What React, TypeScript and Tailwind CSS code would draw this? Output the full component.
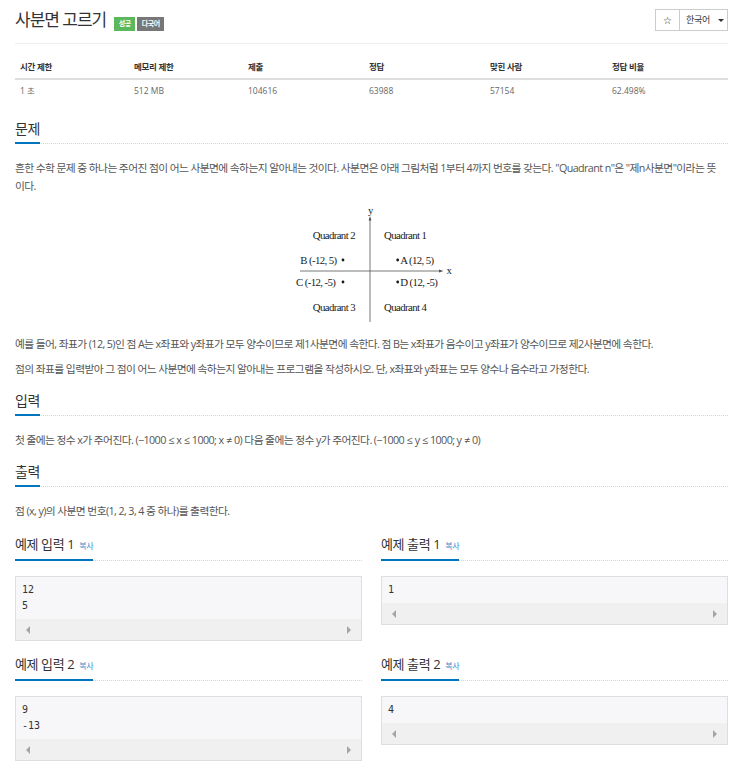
import React from "react";

function Headline({ children, small }: { children: React.ReactNode; small?: boolean }) {
  return (
    <div className="flex border-b border-dotted border-[#d5d5d5]">
      <h2
        className={
          small
            ? "-mb-px border-b-2 border-[#0076c0] pb-[3px] text-[13px] leading-[20px] tracking-[-0.4px] text-[#333] font-normal flex items-baseline"
            : "-mb-px border-b-2 border-[#0076c0] pb-[3px] text-[14px] leading-[20px] tracking-[-0.5px] text-[#333] font-normal"
        }
      >
        {children}
      </h2>
    </div>
  );
}

function SampleBox({ lines }: { lines: string[] }) {
  return (
    <div className="mt-[15px] border border-[#dedede] bg-[#f7f7f9]">
      <pre className="px-[6px] pt-[5px] pb-[5px] font-['DejaVu_Sans_Mono',monospace] text-[10px] leading-[16px] text-[#333]">
        {lines.join("\n")}
      </pre>
      <div className="h-[21px] bg-[#f0f0f0] flex items-center justify-between pl-[10px] pr-[10px]">
        <div className="w-0 h-0 border-y-[4px] border-y-transparent border-r-[4px] border-r-[#a5a5a5]" />
        <div className="w-0 h-0 border-y-[4px] border-y-transparent border-l-[4px] border-l-[#a5a5a5]" />
      </div>
    </div>
  );
}

function Sample({ title, lines }: { title: string; lines: string[] }) {
  return (
    <div>
      <Headline small>
        <span>{title}</span>
        <span className="ml-[5px] text-[8px] text-[#428bca] tracking-[-0.3px]">복사</span>
      </Headline>
      <SampleBox lines={lines} />
    </div>
  );
}

function Rel({ children }: { children: React.ReactNode }) {
  return <span className="px-[2.5px]">{children}</span>;
}

function Figure() {
  return (
    <div className="h-[126px] mb-[7px] flex justify-center">
      <svg width="200" height="126" viewBox="0 0 200 126">
        <g fill="#1a1a1a" fontSize="10.8" fontFamily="'Liberation Serif', serif">
          <text x="96" y="12">y</text>
          <text x="174.5" y="72">x</text>
          <text x="40.7" y="36.5">Quadrant 2</text>
          <text x="112" y="36.5">Quadrant 1</text>
          <text x="28.3" y="61.5">B (-12, 5)</text>
          <text x="128.3" y="61.5">A (12, 5)</text>
          <text x="24" y="83.5">C (-12, -5)</text>
          <text x="128.3" y="83.5">D (12, -5)</text>
          <text x="40.7" y="108.5">Quadrant 3</text>
          <text x="112" y="108.5">Quadrant 4</text>
          <circle cx="71" cy="58" r="1.4" />
          <circle cx="125.7" cy="58" r="1.4" />
          <circle cx="71" cy="80" r="1.4" />
          <circle cx="125.7" cy="80" r="1.4" />
        </g>
        <line x1="98" y1="16" x2="98" y2="120" stroke="#555" strokeWidth="0.8" />
        <polygon points="98,14 96.6,18.5 99.4,18.5" fill="#555" />
        <line x1="28" y1="69" x2="169" y2="69" stroke="#555" strokeWidth="0.8" />
        <polygon points="171.5,69 167,67.6 167,70.4" fill="#555" />
      </svg>
    </div>
  );
}

export default function App() {
  return (
    <div className="w-[713px] ml-[15px] bg-white font-['Open_Sans','Noto_Sans_CJK_KR',sans-serif] text-[#555] pb-[14px]">
      {/* header */}
      <div className="h-[44px] border-b border-[#eeeeee] flex justify-between items-start">
        <div className="flex items-start pt-[8px]">
          <h1 className="text-[17px] leading-[24px] tracking-[-1px] text-[#333] font-normal">사분면 고르기</h1>
          <span className="ml-[8px] mt-[9px] h-[14px] w-[21px] bg-[#5cb85c] text-white text-[7px] font-bold flex items-center justify-center tracking-[-0.5px]">
            성공
          </span>
          <span className="ml-[2px] mt-[9px] h-[14px] w-[27px] bg-[#777777] text-white text-[7px] font-bold flex items-center justify-center tracking-[-0.5px]">
            다국어
          </span>
        </div>
        <div className="flex mt-[9px]">
          <div className="w-[25px] h-[22px] border border-[#cccccc] flex items-center justify-center text-[10px] text-[#222] font-['DejaVu_Sans',sans-serif]">
            ☆
          </div>
          <div className="w-[48px] h-[22px] border border-l-0 border-[#cccccc] flex items-center pl-[6px] text-[9px] text-[#333] tracking-[-0.3px]">
            <span>한국어</span>
            <span className="ml-[8px] w-0 h-0 border-x-[3px] border-x-transparent border-t-[3px] border-t-[#333]" />
          </div>
        </div>
      </div>

      {/* table */}
      <div className="mt-[12px] text-[8.5px]">
        <div className="grid grid-cols-[114px_114px_121px_121px_122px_1fr] h-[24px] items-center border-b-2 border-[#dddddd] font-bold text-[#333] tracking-[-0.3px]">
          <div className="pl-[5px]">시간 제한</div>
          <div className="pl-[5px]">메모리 제한</div>
          <div className="pl-[5px]">제출</div>
          <div className="pl-[5px]">정답</div>
          <div className="pl-[5px]">맞힌 사람</div>
          <div className="pl-[5px]">정답 비율</div>
        </div>
        <div className="grid grid-cols-[114px_114px_121px_121px_122px_1fr] h-[22px] items-center text-[#666]">
          <div className="pl-[5px]">1 초</div>
          <div className="pl-[5px]">512 MB</div>
          <div className="pl-[5px]">104616</div>
          <div className="pl-[5px]">63988</div>
          <div className="pl-[5px]">57154</div>
          <div className="pl-[5px]">62.498%</div>
        </div>
      </div>

      <div className="text-[10.75px] leading-[18px] tracking-[-0.6px]">
        {/* 문제 */}
        <div className="mt-[17px]">
          <Headline>문제</Headline>
          <div className="mt-[15px]">
            <p className="mb-[7px]">
              흔한 수학 문제 중 하나는 주어진 점이 어느 사분면에 속하는지 알아내는 것이다. 사분면은 아래 그림처럼 1부터 4까지 번호를 갖는다. "Quadrant n"은 "제n사분면"이라는 뜻<br />이다.
            </p>
            <Figure />
            <p className="mb-[7px]">
              예를 들어, 좌표가 (12, 5)인 점 A는 x좌표와 y좌표가 모두 양수이므로 제1사분면에 속한다. 점 B는 x좌표가 음수이고 y좌표가 양수이므로 제2사분면에 속한다.
            </p>
            <p>점의 좌표를 입력받아 그 점이 어느 사분면에 속하는지 알아내는 프로그램을 작성하시오. 단, x좌표와 y좌표는 모두 양수나 음수라고 가정한다.</p>
          </div>
        </div>

        {/* 입력 */}
        <div className="mt-[13px]">
          <Headline>입력</Headline>
          <p className="mt-[15px]">
            첫 줄에는 정수 x가 주어진다. (−1000<Rel>≤</Rel>x<Rel>≤</Rel>1000; x<Rel>≠</Rel>0) 다음 줄에는 정수 y가 주어진다. (−1000<Rel>≤</Rel>y<Rel>≤</Rel>1000; y<Rel>≠</Rel>0)
          </p>
        </div>

        {/* 출력 */}
        <div className="mt-[13px]">
          <Headline>출력</Headline>
          <p className="mt-[15px]">점 (x, y)의 사분면 번호(1, 2, 3, 4 중 하나)를 출력한다.</p>
        </div>
      </div>

      <div className="mt-[14px] grid grid-cols-2 gap-x-[19px] items-start">
        <Sample title="예제 입력 1" lines={["12", "5"]} />
        <Sample title="예제 출력 1" lines={["1"]} />
      </div>
      <div className="mt-[13px] grid grid-cols-2 gap-x-[19px] items-start">
        <Sample title="예제 입력 2" lines={["9", "-13"]} />
        <Sample title="예제 출력 2" lines={["4"]} />
      </div>
    </div>
  );
}
